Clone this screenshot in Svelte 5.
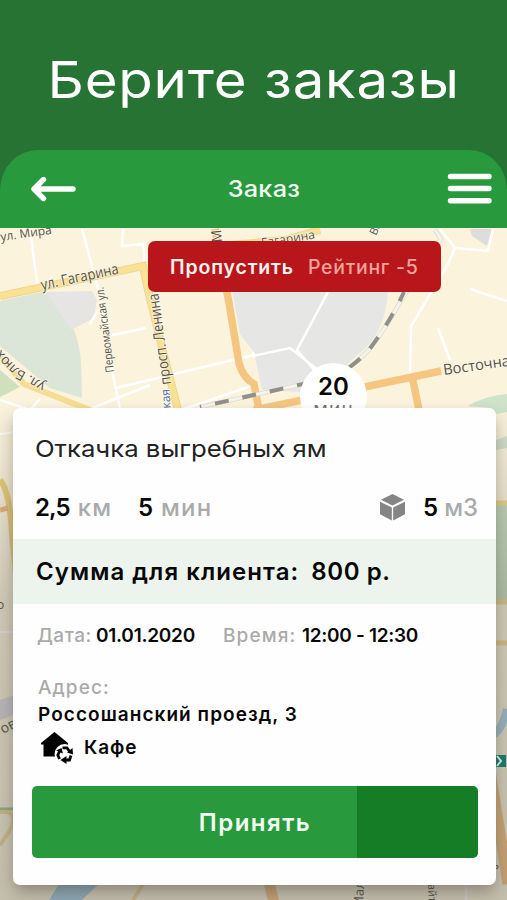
<script lang="ts">
    let skipped = $state(false);
    let accepted = $state(false);

    const order = {
        service: 'Откачка выгребных ям',
        distance: '2,5',
        minutes: 5,
        volume: 5,
        price: '800 р.',
        date: '01.01.2020',
        time: '12:00 - 12:30',
        address: 'Россошанский проезд, 3',
        place: 'Кафе'
    };

    const eta = 20;
    const progress = 72.9;
</script>

<div class="screen">
    <h1>Берите заказы</h1>

    <div class="app">
        <header>
            <button class="icon" aria-label="Назад">
                <svg width="46" height="26" viewBox="0 0 46 26">
                    <path d="M12.500 3.500 3 13l9.500 9.500M3.500 13H42" fill="none" stroke="#fff" stroke-width="5.400" stroke-linecap="round" stroke-linejoin="round" />
                </svg>
            </button>
            <h2>Заказ</h2>
            <button class="icon" aria-label="Меню">
                <svg width="46" height="32" viewBox="0 0 46 32">
                    <path d="M3.500 3.500H42M3.500 15.500H42M3.500 27.800H42" stroke="#fff" stroke-width="5.400" stroke-linecap="round" />
                </svg>
            </button>
        </header>

        <main>
            <svg class="map" viewBox="0 228 507 672" width="507" height="672" aria-hidden="true">
                <defs>
                    <linearGradient id="shade" x1="0" y1="0" x2="0" y2="1">
                        <stop offset="0" stop-color="#77736a" stop-opacity="0" />
                        <stop offset="0.400" stop-color="#77736a" stop-opacity="0.350" />
                        <stop offset="1" stop-color="#77736a" stop-opacity="0.420" />
                    </linearGradient>
                    <path id="blucher" d="M46 384 21 370Q9 361 -8 338" />
                </defs>
                <rect y="228" width="507" height="672" fill="#fbf3dc" />

                <!-- parks and blocks -->
                <path d="M0 301 46 291Q60 312 74 330 80 345 81 364L82 398 50 388 0 346Z" fill="#dbe5d8" />
                <path d="M0 370 20 387 0 397Z" fill="#cfe0bd" />
                <path d="M46 292 92 291 97 300 94 318 71 330Z" fill="#e6e5e3" />
                <path d="M232 290H388Q386 335 356 356L318 393 262 390 254 352 240 334Z" fill="#e6e6e5" />
                <path d="M470 229H492L487 246 472 236Z" fill="#dddddd" />
                <path d="M468 406Q484 396 507 394V412L496 414 490 408ZM496 440 507 436V448L496 450Z" fill="#cfe3cb" />
                <path d="M494 503H507V604H494Z" fill="#c4dcc0" />

                <!-- side streets -->
                <g fill="none" stroke="#fff" stroke-width="2.500">
                    <path d="M30 230 38 289M82 229 97 285 112 370 120 409M123 229 122 246 143 244 145 266M107 336 146 328M116 388 254 355M98 310 90 324" />
                    <path d="M328 292 297 350 315 371M253 356 290 348 318 370M254 358 253 352" />
                    <path d="M440 229 455 248 448 264 411 326 410 378M455 248 488 251 493 229M470 289 507 301M438 328 450 360M184 409 254 385" />
                    <path d="M0 400 30 410 40 399M90 409 150 385M466 880V903" />
                </g>

                <!-- main roads -->
                <g fill="none">
                    <path d="M0 296 143 266 148 290 162 347 178 410M320 230 285 240 220 246" stroke="#efd690" stroke-width="8" />
                    <path d="M0 296 143 266 148 290 162 347 178 410M320 230 285 240 220 246" stroke="#f9e294" stroke-width="6" />
                    <path d="M0 356 24 384 95 412" stroke="#f5dd94" stroke-width="6" />
                    <path d="M215 229 229 303 239 363Q243 378 254 384L259 410M254 410 441 371M412 376 419 410" stroke="#f5c680" stroke-width="7.500" />
                </g>

                <!-- railway -->
                <path d="M435 230 441 239 400 302Q389 324 368 351 350 370 330 378L200 407" fill="none" stroke="#dcdad3" stroke-width="4.500" />
                <path d="M435 230 441 239 400 302Q389 324 368 351 350 370 330 378L200 407" fill="none" stroke="#f6f3ea" stroke-width="3" />
                <path d="M404 292Q389 324 368 351 350 370 330 378L200 407" fill="none" stroke="#908f89" stroke-width="4" stroke-dasharray="14 14" stroke-dashoffset="4" />

                <!-- strips around the order card -->
                <g fill="none">
                    <path d="M0 480Q10 492 12 535L16 575" stroke="#edce79" stroke-width="6" />
                    <path d="M0 510 8 508" stroke="#efb477" stroke-width="5" />
                    <path d="M0 632H15M0 434 15 432" stroke="#fff" stroke-width="2" />
                    <path d="M0 809H15" stroke="#8fc58c" stroke-width="3" />
                    <path d="M0 812Q20 810 9 832L0 845M132 902 143 884" stroke="#ecd692" stroke-width="4" />
                    <path d="M494 503H507M494 602H507M494 643H507" stroke="#efd986" stroke-width="5" />
                    <path d="M492 735Q502 731 507 709" stroke="#a5d0e8" stroke-width="8" />
                    <path d="M490 770 508 884M268 878 274 903" stroke="#f5bd78" stroke-width="11" />
                </g>
                <path d="M49 900 63 878H105L82 900Z" fill="#9ccbe6" />
                <path d="M0 700 14 695V715L0 720Z" fill="#d9d8e0" />

                <rect y="400" width="507" height="500" fill="url(#shade)" />
                <path d="M495 755H506V767H495Z" fill="#197a6c" />
                <path d="M497 756 501 761 497 766" fill="none" stroke="#dfe8e0" stroke-width="2" />

                <g class="streets">
                    <text transform="translate(1 241) rotate(-8)" font-size="12">ул. Мира</text>
                    <text transform="translate(42 290) rotate(-12)" textLength="79" lengthAdjust="spacingAndGlyphs">ул. Гагарина</text>
                    <text transform="translate(114 372) rotate(-97)" font-size="11.500" textLength="86" lengthAdjust="spacingAndGlyphs">Первомайская ул.</text>
                    <text transform="translate(171 384) rotate(-98)" textLength="92" lengthAdjust="spacingAndGlyphs">просп. Ленина</text>
                    <text transform="translate(171 414) rotate(-94)" font-size="12" class="metro">ская</text>
                    <text font-size="14"><textPath href="#blucher">ул. Блюхе</textPath></text>
                    <text transform="translate(262 247) rotate(-9)" font-size="12">Гагарина</text>
                    <text transform="translate(222 242) rotate(-95)" font-size="14">М</text>
                    <text transform="translate(376 236) rotate(-65)" font-size="11">Ва</text>
                    <text transform="translate(444 375) rotate(-8)" textLength="75" lengthAdjust="spacingAndGlyphs">Восточная</text>
                </g>
                <g class="streets shaded">
                    <text transform="translate(3 734) rotate(-28)" font-size="14">ов</text>
                    <text transform="translate(-3 609)" font-size="12">о</text>
                    <text transform="translate(363 908) rotate(-88)" font-size="13">Мал</text>
                    <text transform="translate(428 884) rotate(88)" font-size="11">айт</text>
                    <text x="492" y="869" font-size="12">ь</text>
                </g>
            </svg>

            <div class="pin">
                <b>{eta}</b>
                <span>мин</span>
            </div>

            <button class="skip" disabled={skipped} onclick={() => skipped = true}>
                <strong>Пропустить</strong>
                <span>Рейтинг -5</span>
            </button>

            <section class="card">
                <h3>{order.service}</h3>

                <div class="stats">
                    <div class="stat distance"><b>{order.distance}</b> <span>км</span></div>
                    <div class="stat"><b>{order.minutes}</b> <span>мин</span></div>
                    <div class="stat volume">
                        <svg width="25" height="27" viewBox="0 0 26 28" fill="#858585">
                            <path d="M13 0 25 6 13 12 1 6Z" />
                            <path d="M0 8 12.300 14V27.500L0 21ZM26 8 13.700 14V27.500L26 21Z" />
                        </svg>
                        <b>{order.volume}</b> <span>м3</span>
                    </div>
                </div>

                <div class="sum">
                    <span>Сумма для клиента:</span>
                    <span class="price">{order.price}</span>
                </div>

                <div class="when">
                    <span class="label date-label">Дата:</span>
                    <span class="date">{order.date}</span>
                    <span class="label time-label">Время:</span>
                    <span class="time">{order.time}</span>
                </div>

                <div class="address">
                    <span class="label">Адрес:</span>
                    <span class="street">{order.address}</span>
                </div>

                <div class="place">
                    <svg width="32" height="32" viewBox="0 0 32 32">
                        <path d="M13.500 0 27 11V14H24V24.500H2.500V12.500H0V11Z" />
                        <circle cx="23.500" cy="22" r="10" fill="#fefefe" />
                        <g fill="none" stroke="#000" stroke-width="2.800">
                            <path d="M18.500 27 16.800 23 19 18.500M21.500 15.800H26L28.500 19.500M30 23.500 28.500 28H24" />
                        </g>
                        <path d="M15 18.500 20.500 16 22 21.500ZM26 20.500 31.500 16 32 22.500ZM25.500 24V32L19.500 28Z" />
                    </svg>
                    <span>{order.place}</span>
                </div>

                <button
                    class="accept"
                    style="--progress: {progress}%"
                    disabled={accepted}
                    onclick={() => accepted = true}
                >
                    Принять
                </button>
            </section>
        </main>
    </div>
</div>

<style>
    :global(body) {
        margin: 0;
    }

    .screen {
        width: 507px;
        height: 900px;
        display: flex;
        flex-direction: column;
        overflow: hidden;
        background: #267334;
        font-family: Inter, "Open Sans", sans-serif;
        color: #080808;
    }

    h1, h2, h3 {
        margin: 0;
        font-weight: 500;
    }

    button {
        border: none;
        padding: 0;
        font-family: inherit;
        cursor: pointer;
    }

    svg {
        display: block;
        flex: none;
    }

    h1 {
        width: 440px;
        height: 150px;
        box-sizing: border-box;
        padding: 49px 0 0 43px;
        font-size: 51px;
        line-height: 62px;
        font-weight: 400;
        letter-spacing: 0.700px;
        white-space: nowrap;
        color: #fff;
        transform: scaleX(1.105);
        transform-origin: left;
    }

    .app {
        flex: 1;
        display: flex;
        flex-direction: column;
        overflow: hidden;
        border-radius: 38px 38px 0 0 / 40px 40px 0 0;
    }

    header {
        height: 78px;
        box-sizing: border-box;
        padding: 0 14px 1px 31px;
        display: flex;
        align-items: center;
        justify-content: space-between;
        background: #29993e;
    }

    .icon {
        background: none;
    }

    h2 {
        font-size: 23px;
        letter-spacing: 0.200px;
        color: #f2fff3;
        margin-left: 3px;
        transform: scaleX(1.1);
    }

    main {
        position: relative;
        flex: 1;
        display: flex;
        flex-direction: column;
    }

    .map {
        position: absolute;
        inset: 0;
    }

    .streets {
        font-family: "Open Sans", sans-serif;
        font-size: 15px;
        fill: #55524c;
        stroke: #fdf7e4;
        stroke-width: 1.500px;
        paint-order: stroke;
    }

    .shaded {
        stroke: none;
    }

    .metro {
        fill: #4a72b8;
    }

    .pin {
        position: absolute;
        top: 135px;
        left: 300px;
        width: 67px;
        height: 67px;
        border-radius: 50%;
        background: #fff;
        display: flex;
        flex-direction: column;
        align-items: center;
    }

    .pin b {
        margin-top: 9px;
        font-size: 24px;
        line-height: 29px;
        font-weight: 600;
    }

    .pin span {
        font-size: 19px;
        line-height: 17px;
        color: #777;
        letter-spacing: 1.200px;
    }

    .skip {
        position: relative;
        width: 293px;
        height: 51px;
        margin: 13px 0 0 148px;
        padding-left: 22px;
        display: flex;
        align-items: center;
        border-radius: 7px;
        background: #b9161b;
        font-size: 19.500px;
        white-space: nowrap;
    }

    .skip strong {
        width: 138px;
        text-align: left;
        font-weight: 600;
        letter-spacing: 0.850px;
        color: #fff3f1;
    }

    .skip span {
        font-weight: 500;
        letter-spacing: 0.700px;
        color: #f3a29c;
    }

    .card {
        position: relative;
        height: 477px;
        margin: 116px 11px 0 13px;
        display: flex;
        flex-direction: column;
        border-radius: 7px;
        background: #fefefe;
        box-shadow: 0 8px 16px -2px rgba(50, 48, 38, 0.4);
        white-space: nowrap;
    }

    h3 {
        width: 400px;
        padding: 26px 0 0 20px;
        font-size: 23.500px;
        line-height: 30px;
        font-weight: 400;
        color: #222;
        transform: scaleX(1.095);
        transform-origin: left;
    }

    .stats {
        height: 75px;
        box-sizing: border-box;
        padding: 12px 18px 0 22px;
        display: flex;
        align-items: center;
        font-size: 24px;
    }

    .stat {
        display: flex;
        align-items: center;
        gap: 8px;
    }

    .stat b {
        font-weight: 600;
    }

    .stat span {
        font-weight: 500;
        color: #aaa;
        letter-spacing: 1.200px;
    }

    .distance {
        width: 103px;
    }

    .distance b {
        letter-spacing: -0.900px;
    }

    .volume {
        margin-left: auto;
        gap: 6px;
    }

    .volume svg {
        margin-right: 12px;
    }

    .volume span {
        letter-spacing: 0;
    }

    .sum {
        height: 65px;
        padding-left: 23px;
        display: flex;
        align-items: center;
        background: #edf3ed;
        font-size: 24px;
        font-weight: 600;
        letter-spacing: 1.050px;
    }

    .price {
        margin-left: 12px;
        letter-spacing: 0.600px;
    }

    .when {
        padding: 20px 0 0 24px;
        display: flex;
        font-size: 19px;
        line-height: 24px;
        font-weight: 600;
    }

    .label {
        font-weight: 500;
        letter-spacing: 1.100px;
        color: #aaa;
    }

    .date-label {
        width: 59px;
        letter-spacing: 0.500px;
    }

    .date {
        width: 127px;
        letter-spacing: -0.250px;
    }

    .time-label {
        width: 79px;
    }

    .time {
        letter-spacing: -0.300px;
    }

    .address {
        padding: 26px 0 0 25px;
        display: flex;
        flex-direction: column;
        font-size: 19px;
        line-height: 27px;
        font-weight: 600;
    }

    .street {
        letter-spacing: 1.050px;
    }

    .place {
        padding: 4px 0 0 28px;
        display: flex;
        align-items: center;
        gap: 11px;
        font-size: 19px;
        font-weight: 600;
        letter-spacing: 0.900px;
    }

    .place span {
        margin-top: -2px;
    }

    .accept {
        height: 72px;
        margin: auto 18px 27px 19px;
        border-radius: 5px;
        background: linear-gradient(90deg, #29993e var(--progress), #167d27 var(--progress));
        font-size: 24px;
        font-weight: 600;
        letter-spacing: 1.500px;
        color: #f2fff3;
    }
</style>
